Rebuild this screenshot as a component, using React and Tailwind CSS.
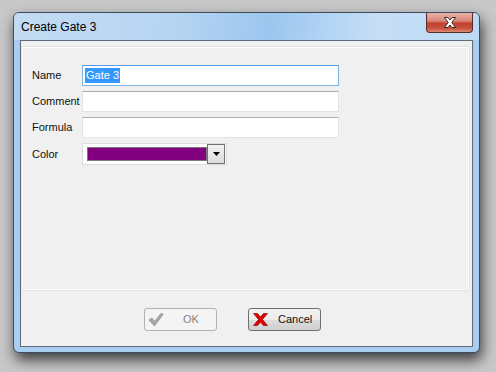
import React from "react";

function CloseGlyph() {
  return (
    <svg width="14" height="11" viewBox="0 0 14 11">
      <path
        d="M1.5 0.5 H5 L7 3 L9 0.5 H12.5 L8.8 5.5 L12.5 10.5 H9 L7 8 L5 10.5 H1.5 L5.2 5.5 Z"
        fill="#ffffff"
        stroke="#3b2a2a"
        strokeWidth="1"
        strokeLinejoin="round"
      />
    </svg>
  );
}

function CheckIcon() {
  return (
    <svg width="16" height="15" viewBox="0 0 16 15">
      <path
        d="M1 8 L4 6 L6.5 9.5 L13.5 1 L15 2.5 L6.5 14 Z"
        fill="#a9a9a9"
        stroke="#8f8f8f"
        strokeWidth="0.8"
        strokeLinejoin="round"
      />
    </svg>
  );
}

function RedX() {
  return (
    <svg width="15" height="13" viewBox="0 0 15 13">
      <path
        d="M0.5 0.5 H4.5 L7.5 4 L10.5 0.5 H14.5 L9.5 6.5 L14.5 12.5 H10.5 L7.5 9 L4.5 12.5 H0.5 L5.5 6.5 Z"
        fill="#e00000"
        stroke="#a00000"
        strokeWidth="0.7"
        strokeLinejoin="round"
      />
    </svg>
  );
}

function Row({ label, children }) {
  return (
    <div className="flex items-center h-[21px]">
      <div className="w-[50px] text-[11px] text-[#111]">{label}</div>
      {children}
    </div>
  );
}

function TextBox({ focused, children }) {
  return (
    <div
      className={
        "w-[257px] h-[21px] bg-white border flex items-center px-[2px] " +
        (focused
          ? "border-[#7fb3e0] border-t-[#569de5]"
          : "border-[#e2e3ea] border-t-[#abadb3]")
      }
    >
      {children}
    </div>
  );
}

export default function App() {
  return (
    <div
      className="w-[496px] h-[372px] bg-[#c8c8c8] overflow-hidden pt-[12px] pl-[13px]"
      style={{ fontFamily: '"Liberation Sans", Arial, sans-serif' }}
    >
      <div className="w-[467px] h-[341px] rounded-[6px] border border-[#3d4b5b] bg-[#a9cdf1] shadow-[2px_7px_14px_rgba(0,0,0,0.7)] flex flex-col overflow-hidden">
        {/* Title bar */}
        <div className="h-[27px] flex items-start justify-between bg-[linear-gradient(100deg,#c3dcf4_0%,#b6d4f2_35%,#9cc6ef_55%,#c6dff7_78%,#bcd9f5_100%)]">
          <div className="pl-[7px] pt-[7px] text-[12px] leading-[14px] text-black">
            Create Gate 3
          </div>
          <div className="mr-[6px] w-[47px] h-[20px] rounded-b-[4px] border border-t-0 border-[#5b2c26] flex items-center justify-center bg-[linear-gradient(180deg,#e9b0a6_0%,#d98a7c_40%,#c2412f_55%,#c8503d_80%,#dc8a78_100%)]">
            <CloseGlyph />
          </div>
        </div>

        {/* Client area */}
        <div className="mx-[6px] h-[307px] border border-[#5d6b7a] bg-[#f0f0f0] flex flex-col">
          <div className="ml-[1px] mr-[3px] mt-[6px] h-[243px] border border-[#fcfcfc] shadow-[0_0_0_1px_#e3e3e3] flex flex-col gap-[5px] pl-[9px] pt-[17px]">
            <Row label="Name">
              <TextBox focused>
                <span className="text-[11px] leading-[15px] bg-[#3399ff] text-white px-[1px]">
                  Gate 3
                </span>
              </TextBox>
            </Row>
            <Row label="Comment">
              <TextBox />
            </Row>
            <Row label="Formula">
              <TextBox />
            </Row>
            <div className="flex items-center h-[22px]">
              <div className="w-[50px] text-[11px] text-[#111]">Color</div>
              <div className="w-[145px] h-[22px] bg-white border border-[#dcdcdc] flex items-center pl-[4px] pr-[1px]">
                <div className="w-[120px] h-[14px] bg-[#800080] border border-[#7a7a7a]" />
                <div className="ml-auto w-[18px] h-[20px] border border-[#707070] bg-[linear-gradient(180deg,#f2f2f2,#dcdcdc)] flex items-center justify-center">
                  <svg width="7" height="4" viewBox="0 0 7 4">
                    <path d="M0 0 H7 L3.5 4 Z" fill="#000" />
                  </svg>
                </div>
              </div>
            </div>
          </div>

          {/* Buttons */}
          <div className="flex gap-[31px] pl-[123px] pt-[18px]">
            <div className="w-[73px] h-[23px] rounded-[3px] border border-[#adb2b5] bg-[#f4f4f4] flex items-center pl-[3px]">
              <CheckIcon />
              <span className="ml-[19px] text-[11px] text-[#838383]">OK</span>
            </div>
            <div className="w-[73px] h-[23px] rounded-[3px] border border-[#707070] bg-[linear-gradient(180deg,#f2f2f2_0%,#ebebeb_50%,#dddddd_51%,#cfcfcf_100%)] flex items-center pl-[4px]">
              <RedX />
              <span className="ml-[10px] text-[11px] text-[#111]">Cancel</span>
            </div>
          </div>
        </div>
      </div>
    </div>
  );
}
